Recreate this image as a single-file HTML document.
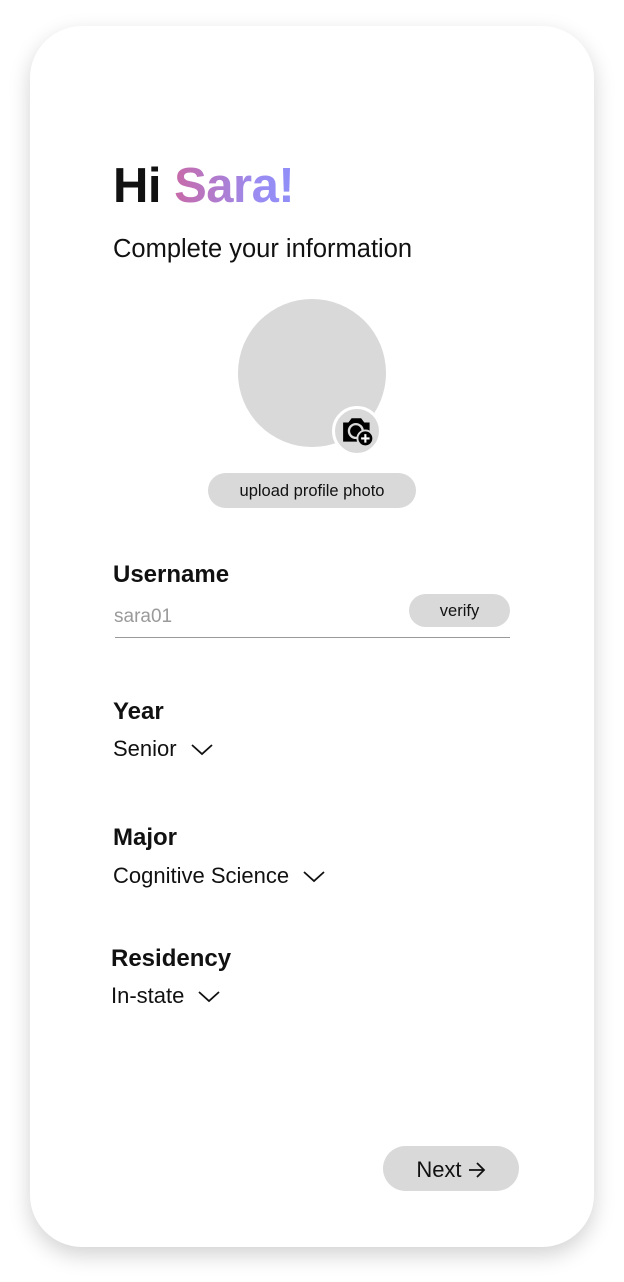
<!DOCTYPE html>
<html><head><style>
body{margin:0;width:624px;height:1282px;background:#fff;position:relative;overflow:hidden;font-family:"Liberation Sans",sans-serif;color:#111}
.card{position:absolute;left:30px;top:26px;width:564px;height:1221px;border-radius:52px;background:#fff;box-shadow:0 8px 22px rgba(0,0,0,0.18)}
.t{position:absolute;line-height:1;white-space:nowrap}
.b{font-weight:bold}
.pill{position:absolute;background:#d9d9d9;border-radius:30px;text-align:center}
.chev{display:inline-block;vertical-align:middle;margin-left:14px}
</style></head><body>
<div class="card"></div>
<div class="t b" style="left:113px;top:162px;font-size:49px;letter-spacing:-0.5px">Hi <span style="background:linear-gradient(90deg,#c86aa8,#9a8cf2 70%,#8f8ff8);-webkit-background-clip:text;background-clip:text;color:transparent">Sara!</span></div>
<div class="t" style="left:113px;top:237px;font-size:25.5px">Complete your information</div>
<div style="position:absolute;left:238px;top:299px;width:148px;height:148px;border-radius:50%;background:#d9d9d9"></div>
<div style="position:absolute;left:332px;top:406px;width:50px;height:50px;border-radius:50%;background:#d9d9d9;border:3px solid #fff;box-sizing:border-box"></div>
<svg style="position:absolute;left:341px;top:414px" width="36" height="34" viewBox="0 0 34 32">
<path d="M2 8 h5 l3 -4 h9 l3 4 h5 v18 h-25 z" fill="#000"/>
<circle cx="14" cy="16" r="6.5" fill="none" stroke="#d9d9d9" stroke-width="2.2"/>
<circle cx="23" cy="23" r="7.5" fill="#000" stroke="#d9d9d9" stroke-width="1.8"/>
<path d="M23 19v8M19 23h8" stroke="#fff" stroke-width="2"/>
</svg>
<div class="pill" style="left:208px;top:473px;width:208px;height:35px;line-height:37px;font-size:16.5px">upload profile photo</div>
<div class="t b" style="left:113px;top:563px;font-size:24px">Username</div>
<div class="t" style="left:114px;top:607px;font-size:19px;color:#9a9a9a">sara01</div>
<div class="pill" style="left:409px;top:594px;width:101px;height:33px;line-height:34px;font-size:16.5px">verify</div>
<div style="position:absolute;left:115px;top:637px;width:395px;height:1px;background:#999"></div>
<div class="t b" style="left:113px;top:700px;font-size:24px">Year</div>
<div class="t" style="left:113px;top:738px;font-size:22px">Senior<svg class="chev" width="22" height="12" viewBox="0 0 22 12"><path d="M1 1l10 9 10-9" fill="none" stroke="#111" stroke-width="1.8"/></svg></div>
<div class="t b" style="left:113px;top:826px;font-size:24px">Major</div>
<div class="t" style="left:113px;top:865px;font-size:22px">Cognitive Science<svg class="chev" width="22" height="12" viewBox="0 0 22 12"><path d="M1 1l10 9 10-9" fill="none" stroke="#111" stroke-width="1.8"/></svg></div>
<div class="t b" style="left:111px;top:947px;font-size:24px">Residency</div>
<div class="t" style="left:111px;top:985px;font-size:22px">In-state<svg class="chev" width="22" height="12" viewBox="0 0 22 12"><path d="M1 1l10 9 10-9" fill="none" stroke="#111" stroke-width="1.8"/></svg></div>
<div class="pill" style="left:383px;top:1146px;width:136px;height:45px;line-height:47px;font-size:22px">Next <svg width="18" height="16" viewBox="0 0 18 16" style="vertical-align:-1px"><path d="M1 8h15M9 1l7 7-7 7" fill="none" stroke="#111" stroke-width="1.8"/></svg></div>
</body></html>
